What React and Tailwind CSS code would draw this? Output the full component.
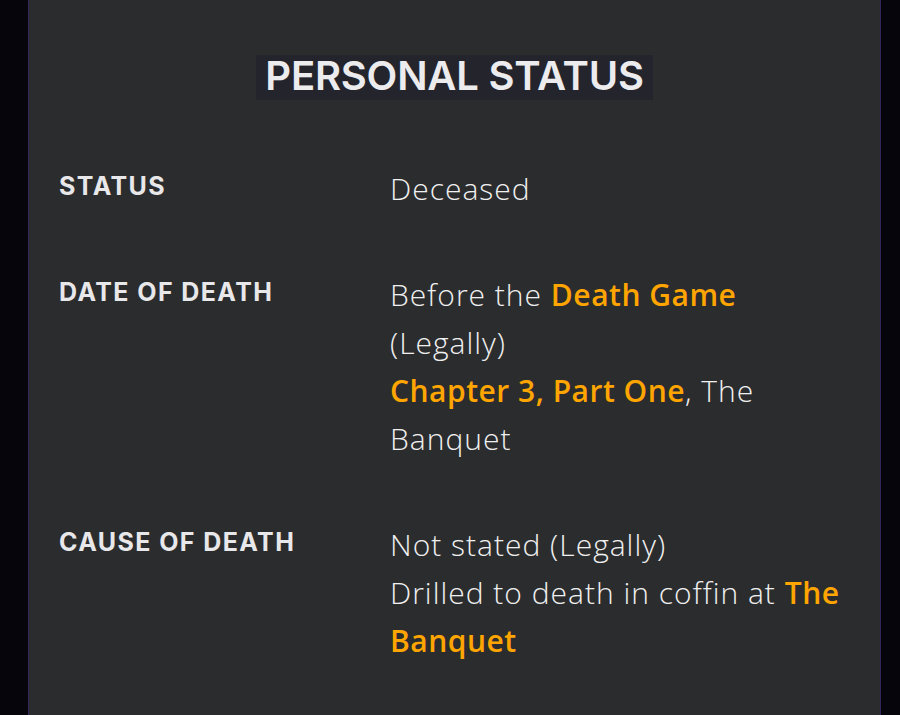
import React from 'react';

const rows = [
  {
    label: 'STATUS',
    lines: [[{ t: 'Deceased' }]],
  },
  {
    label: 'DATE OF DEATH',
    lines: [
      [{ t: 'Before the ' }, { t: 'Death Game', link: true }],
      [{ t: '(Legally)' }],
      [{ t: 'Chapter 3, Part One', link: true }, { t: ', The' }],
      [{ t: 'Banquet' }],
    ],
  },
  {
    label: 'CAUSE OF DEATH',
    lines: [
      [{ t: 'Not stated (Legally)' }],
      [{ t: 'Drilled to death in coffin at ' }, { t: 'The', link: true }],
      [{ t: 'Banquet', link: true }],
    ],
  },
];

const App = () => {
  return (
    <div
      className="w-[900px] h-[715px] overflow-hidden bg-[#05050b] flex"
      style={{ fontFamily: 'Inter, "Noto Sans", sans-serif' }}
    >
      <div className="ml-[28px] w-[853px] h-full bg-[#2b2c2e] border-x border-[#33265c]">
        <div className="flex justify-center pt-[55px]">
          <h2 className="bg-[#24242d] px-[9px] h-[45px] leading-[42px] text-[40px] font-semibold tracking-[-0.2px] text-[#ececee]">
            PERSONAL STATUS
          </h2>
        </div>

        <div className="mt-[65px] pl-[30px] pr-[20px] flex flex-col gap-[58px]">
          {rows.map((row) => (
            <div key={row.label} className="grid grid-cols-[331px_1fr]">
              <div className="text-[25px] leading-[42px] font-bold tracking-[1.4px] text-[#e8e8ea]">{row.label}</div>
              <div
                className="text-[30px] leading-[48px] font-light tracking-[1px] text-[#f0f0f0] whitespace-nowrap"
                style={{ fontFamily: '"Open Sans", Inter, sans-serif' }}
              >
                {row.lines.map((line, i) => (
                  <div key={i}>
                    {line.map((part, j) =>
                      part.link ? (
                        <span key={j} className="text-[#ffa500] font-semibold tracking-[0.5px]">
                          {part.t}
                        </span>
                      ) : (
                        <span key={j}>{part.t}</span>
                      )
                    )}
                  </div>
                ))}
              </div>
            </div>
          ))}
        </div>
      </div>
    </div>
  );
};

export default App;
